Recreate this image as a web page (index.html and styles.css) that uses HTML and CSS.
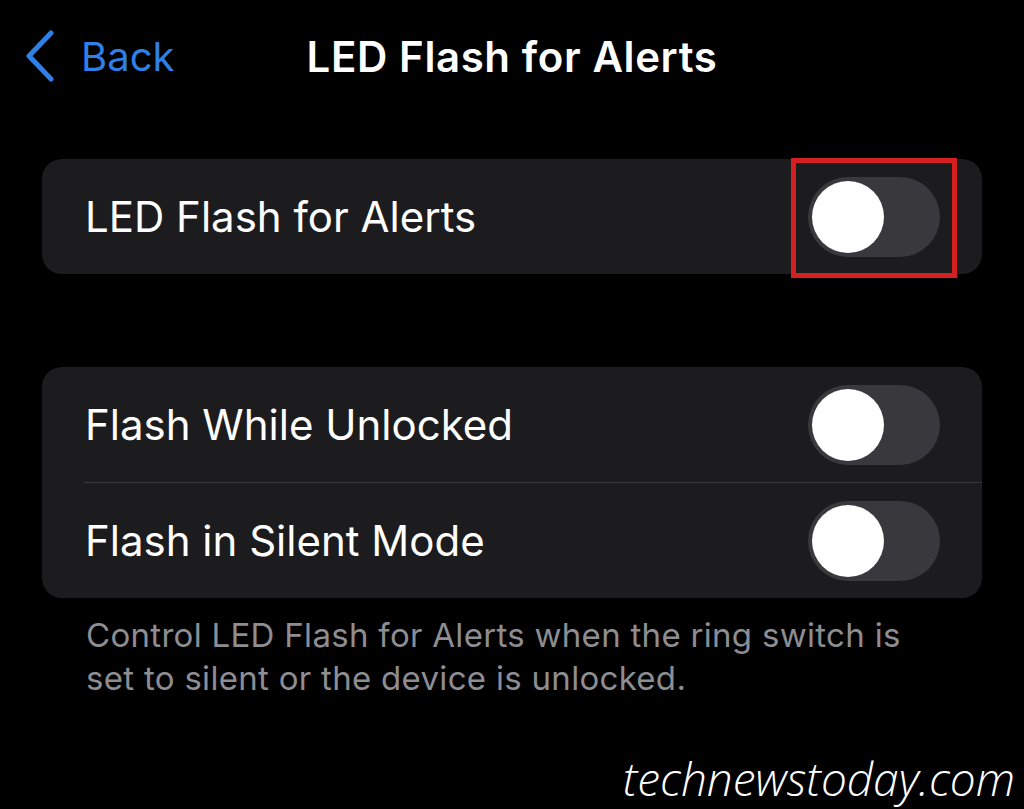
FILE: index.html
```html
<!DOCTYPE html>
<html lang="en">
<head>
  <meta charset="UTF-8" />
  <meta name="viewport" content="width=device-width, initial-scale=1.0"/>
  <title>LED Flash for Alerts</title>
  <link rel="stylesheet" href="styles.css">
</head>
<body>
  <div class="tela">
    <header class="nav">
      <a class="voltar" href="#">
        <svg class="chevron" width="32" height="52" viewBox="0 0 32 52">
          <path d="M26 3 L4 26 L26 49" fill="none" stroke="#2f80e6" stroke-width="5" stroke-linecap="round" stroke-linejoin="round"/>
        </svg>
        <span>Back</span>
      </a>
      <h1>LED Flash for Alerts</h1>
      <span></span>
    </header>

    <section class="grupo grupo-principal">
      <div class="linha">
        <span>LED Flash for Alerts</span>
        <div class="toggle marcado">
          <div class="bolinha"></div>
          <div class="destaque"></div>
        </div>
      </div>
    </section>

    <section class="grupo">
      <div class="linha">
        <span>Flash While Unlocked</span>
        <div class="toggle"><div class="bolinha"></div></div>
      </div>
      <div class="separador"></div>
      <div class="linha">
        <span>Flash in Silent Mode</span>
        <div class="toggle"><div class="bolinha"></div></div>
      </div>
    </section>

    <p class="rodape">Control LED Flash for Alerts when the ring switch is<br>set to silent or the device is unlocked.</p>

    <div class="marca">technewstoday.com</div>
  </div>
</body>
</html>
```
FILE: styles.css
```css
body {
  margin: 0;
  background: #000;
  font-family: Inter, 'Liberation Sans', sans-serif;
  color: #fff;
}

.tela {
  position: relative;
  width: 1024px;
  height: 809px;
  overflow: hidden;
}

.nav {
  display: grid;
  grid-template-columns: 1fr auto 1fr;
  align-items: center;
  height: 112px;
  padding: 0 25px;
}

.voltar {
  display: flex;
  align-items: center;
  gap: 24px;
  color: #2f80e6;
  text-decoration: none;
  font-size: 40px;
}

.nav h1 {
  margin: 0;
  font-size: 42px;
  font-weight: 600;
  letter-spacing: 0.6px;
}

.grupo {
  margin: 0 42px;
  background: #1c1c1e;
  border-radius: 20px;
}

.grupo-principal {
  margin-top: 47px;
  margin-bottom: 93px;
}

.linha {
  display: flex;
  align-items: center;
  justify-content: space-between;
  height: 115px;
  padding: 0 42px 0 43px;
  font-size: 42px;
}

.separador {
  height: 1px;
  margin-left: 42px;
  background: #38383a;
}

.toggle {
  position: relative;
  width: 132px;
  height: 80px;
  border-radius: 40px;
  background: #39393d;
  box-sizing: border-box;
  padding: 4px;
}

.bolinha {
  width: 72px;
  height: 72px;
  border-radius: 50%;
  background: #fff;
}

.destaque {
  position: absolute;
  left: -17px;
  right: -17px;
  top: -19px;
  bottom: -21px;
  border: 5px solid #d61f1f;
}

.rodape {
  margin: 16px 0 0 86px;
  font-size: 33px;
  line-height: 43px;
  letter-spacing: 0.3px;
  color: #8d8d92;
}

.marca {
  position: absolute;
  right: 9px;
  bottom: 0;
  font-family: 'Open Sans', sans-serif;
  font-style: italic;
  font-weight: 300;
  font-size: 46px;
  color: #fff;
}
```
